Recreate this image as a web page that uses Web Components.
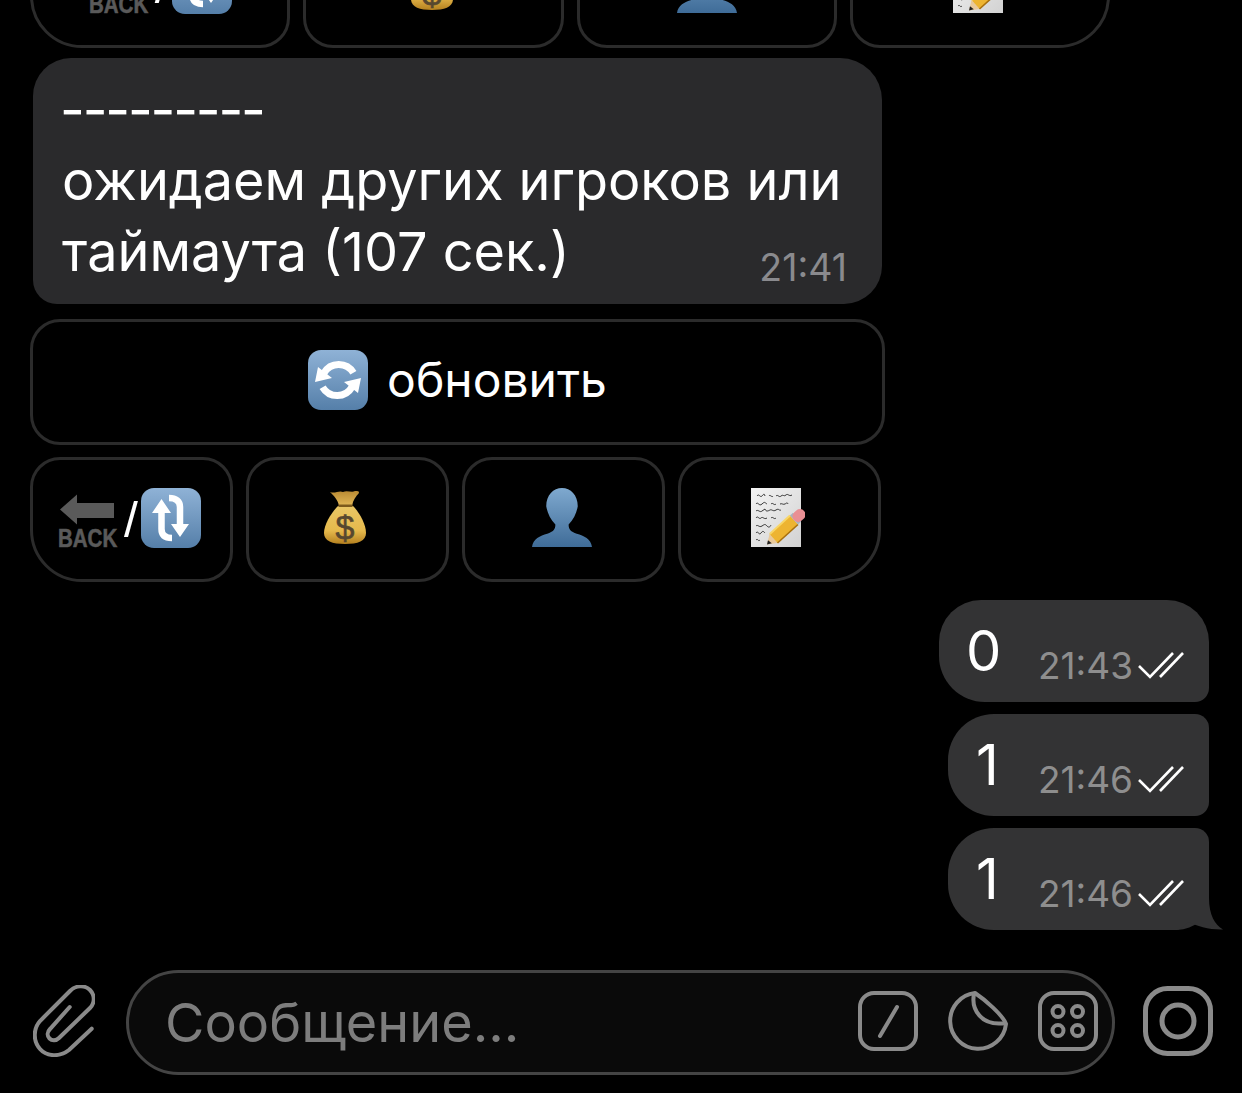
<!DOCTYPE html>
<html lang="ru">
<head>
<meta charset="utf-8">
<title>Чат</title>
<style>
  html, body { margin: 0; padding: 0; background: #000; }
  body { font-family: "Inter", "Noto Sans", sans-serif; color: #fff; }
</style>
</head>
<body>
<chat-screen>
  <key-row cols="4" size="wide">
    <key-btn centered corner="left"><back-refresh></back-refresh></key-btn>
    <key-btn centered><emoji-icon name="bag"></emoji-icon></key-btn>
    <key-btn centered><emoji-icon name="bust"></emoji-icon></key-btn>
    <key-btn centered corner="right"><emoji-icon name="memo"></emoji-icon></key-btn>
  </key-row>

  <in-bubble time="21:41">
    <span slot="head" style="letter-spacing:-2.2px;margin-left:-2px">---------</span>
    <span slot="head">ожидаем других игроков или</span>
    таймаута (107 сек.)
  </in-bubble>

  <key-row cols="1">
    <key-btn centered><emoji-icon name="sync"></emoji-icon><key-label>обновить</key-label></key-btn>
  </key-row>

  <key-row cols="4">
    <key-btn corner="left"><back-refresh></back-refresh></key-btn>
    <key-btn><emoji-icon name="bag"></emoji-icon></key-btn>
    <key-btn><emoji-icon name="bust"></emoji-icon></key-btn>
    <key-btn corner="right"><emoji-icon name="memo"></emoji-icon></key-btn>
  </key-row>

  <out-bubble text="0" time="21:43" pos="first" pad="27" width="270"></out-bubble>
  <out-bubble text="1" time="21:46" pos="middle" pad="28" width="261"></out-bubble>
  <out-bubble text="1" time="21:46" pos="last" pad="28" width="261"></out-bubble>

  <message-bar></message-bar>
</chat-screen>

<script>
class ChatScreen extends HTMLElement {
  constructor() {
    super();
    this.attachShadow({ mode: 'open' });
    this.shadowRoot.innerHTML = `
      <style>
        :host { display: flex; flex-direction: column; justify-content: flex-end; height: 1093px; overflow: hidden; background: #000; padding-bottom: 18px; box-sizing: border-box; }
        ::slotted(*) { flex-shrink: 0; }
      </style>
      <slot></slot>
    `;
  }
}

class KeyRow extends HTMLElement {
  constructor() {
    super();
    this.attachShadow({ mode: 'open' });
  }

  connectedCallback() {
    const wide = this.getAttribute('size') === 'wide';
    const cols = this.getAttribute('cols') || '1';
    const single = cols === '1';
    // the top row belongs to an older message, it is wider
    const width = wide ? 1080 : single ? 855 : 851;
    const top = wide ? 0 : single ? 15 : 12;
    this.shadowRoot.innerHTML = `
      <style>
        :host { display: grid; grid-template-columns: repeat(${cols}, 1fr); gap: 13px; width: ${width}px; height: ${single ? 126 : 125}px; margin: ${top}px 0 0 30px; }
      </style>
      <slot></slot>
    `;
  }
}

class KeyBtn extends HTMLElement {
  constructor() {
    super();
    this.attachShadow({ mode: 'open' });
  }

  connectedCallback() {
    const corner = this.getAttribute('corner');
    const bl = corner === 'left' ? 52 : 30;
    const br = corner === 'right' ? 52 : 30;
    const right = this.hasAttribute('centered') ? 0 : 4;
    this.shadowRoot.innerHTML = `
      <style>
        :host { display: flex; align-items: center; justify-content: center; gap: 19px; box-sizing: border-box; padding: 0 ${right}px 4px 0; border: 3px solid #2b2b2b; border-radius: 30px 30px ${br}px ${bl}px; }
      </style>
      <slot></slot>
    `;
  }
}

class KeyLabel extends HTMLElement {
  constructor() {
    super();
    this.attachShadow({ mode: 'open' });
    this.shadowRoot.innerHTML = `
      <style>
        :host { display: block; font-size: 48px; line-height: 60px; font-weight: 400; color: #fff; }
      </style>
      <slot></slot>
    `;
  }
}

class InBubble extends HTMLElement {
  constructor() {
    super();
    this.attachShadow({ mode: 'open' });
  }

  connectedCallback() {
    this.shadowRoot.innerHTML = `
      <style>
        :host { display: block; width: 849px; margin: 10px 0 0 33px; box-sizing: border-box; padding: 16px 35px 17px 29px; background: #2a2a2c; border-radius: 38px 42px 38px 24px; font-size: 54px; line-height: 71px; color: #fff; }
        ::slotted([slot="head"]) { display: block; white-space: nowrap; }
        .last { display: flex; justify-content: space-between; align-items: flex-end; }
        .time { font-size: 37.5px; line-height: 44px; color: #8a8a8e; margin-bottom: -3px; }
      </style>
      <slot name="head"></slot>
      <div class="last"><span><slot></slot></span><span class="time">${this.getAttribute('time')}</span></div>
    `;
  }
}

class OutBubble extends HTMLElement {
  constructor() {
    super();
    this.attachShadow({ mode: 'open' });
  }

  connectedCallback() {
    const pos = this.getAttribute('pos');
    const radius = {
      first: '42px 42px 14px 46px',
      middle: '46px 14px 14px 46px',
      last: '46px 14px 32px 46px',
    }[pos];
    const top = pos === 'first' ? 18 : 12;
    this.shadowRoot.innerHTML = `
      <style>
        :host { display: flex; align-items: flex-start; justify-content: space-between; position: relative; align-self: flex-end; width: ${this.getAttribute('width')}px; height: 102px; box-sizing: border-box; margin: ${top}px 33px 0 0; padding: 16px 25px 0 ${this.getAttribute('pad')}px; background: #333334; border-radius: ${radius}; }
        .text { font-size: 56px; line-height: 70px; color: #fff; }
        .meta { display: flex; align-items: center; gap: 5px; margin-top: 27px; }
        .time { font-size: 37px; line-height: 46px; color: #8e8e8e; }
        .checks { width: 46px; height: 28px; display: block; margin-top: -3px; }
        .tail { position: absolute; right: -15px; bottom: 0; width: 47px; height: 32px; }
      </style>
      <span class="text">${this.getAttribute('text')}</span>
      <div class="meta">
        <span class="time">${this.getAttribute('time')}</span>
        <svg class="checks" viewBox="0 0 46 28" fill="none" stroke="#fff" stroke-width="2.6">
          <path d="M1 15 L12 26 L35 2"/>
          <path d="M22 26 L45 2"/>
        </svg>
      </div>
      ${pos === 'last' ? `<svg class="tail" viewBox="0 0 47 32"><path d="M0 32 C5 31 8 27 11 24 C20 28 33 32 46 31.5 C38 27 32 17 32 0 L0 0 Z" fill="#333334"/></svg>` : ''}
    `;
  }
}

class BackRefresh extends HTMLElement {
  constructor() {
    super();
    this.attachShadow({ mode: 'open' });
    this.shadowRoot.innerHTML = `
      <style>
        :host { display: flex; align-items: flex-end; }
        .slash { font-family: "Liberation Sans", sans-serif; font-size: 50px; line-height: 56px; color: #fff; margin: 0 3px 0 6px; }
      </style>
      <emoji-icon name="back"></emoji-icon><span class="slash">/</span><emoji-icon name="loop"></emoji-icon>
    `;
  }
}

const TILE = `<defs><linearGradient id="t" x1="0" y1="0" x2="0" y2="1"><stop offset="0" stop-color="#8fb2d6"/><stop offset="1" stop-color="#557fa9"/></linearGradient></defs>
      <rect width="60" height="60" rx="13" fill="url(#t)"/>`;

const EMOJI = {
  sync: `<svg width="60" height="60" viewBox="0 0 60 60">
      ${TILE}
      <g fill="none" stroke="#fff" stroke-width="7"><path d="M45.4 22.8 A17 17 0 0 0 16 23"/><path d="M14.6 37.2 A17 17 0 0 0 44 37"/></g>
      <path d="M7 32 L10 17 L24 28 Z M53 28 L50 43 L36 32 Z" fill="#fff"/>
    </svg>`,
  loop: `<svg width="60" height="60" viewBox="0 0 60 60">
      ${TILE}
      <g fill="none" stroke="#fff" stroke-width="6.5"><path d="M20.5 22 V41 C20.5 47 24 50 31 50"/><path d="M39 38 V19 C39 13 35 10 28 10"/></g>
      <path d="M11 25 L20.5 11 L30 25 Z M30 36 L48 36 L39 49 Z" fill="#fff"/>
    </svg>`,
  back: `<svg width="60" height="57" viewBox="0 0 60 57">
      <path d="M2 18.5 L19 3.5 V12 H56 V27 H19 V33.5 Z" fill="#5a5a5a"/>
      <text x="0" y="45.9" transform="scale(1 1.22)" font-family="Liberation Sans, sans-serif" font-weight="700" font-size="20.5" fill="#5a5a5a" stroke="#5a5a5a" stroke-width=".5">BACK</text>
    </svg>`,
  bag: `<svg width="44" height="55" viewBox="0 0 44 55">
      <defs>
        <linearGradient id="g" x1="0" y1="0" x2="0" y2="1"><stop offset="0" stop-color="#e9c766"/><stop offset=".65" stop-color="#e6b94c"/><stop offset="1" stop-color="#b4801f"/></linearGradient>
        <linearGradient id="n" x1="0" y1="0" x2="0" y2="1"><stop offset="0" stop-color="#b98a33"/><stop offset="1" stop-color="#e2b857"/></linearGradient>
      </defs>
      <path d="M14 16 C8 22 0 34 0 43 C0 51 8 54 21 54 C34 54 42 51 42 43 C42 34 35 22 29 16 Z" fill="url(#g)"/>
      <path d="M6 2 C11 4 15 0 19 2 C23 0 28 3 31 1 C34 1 35 1 35 3 C32 6 29 10 28 16 H15 C14 10 10 6 6 2 Z" fill="url(#n)"/>
      <path d="M14.5 14.5 H28.5 V17 H14.5 Z" fill="#7c5a1c"/>
      <text x="21" y="49" text-anchor="middle" font-family="Liberation Sans, sans-serif" font-size="34" fill="#57482f" stroke="#57482f" stroke-width=".6">$</text>
    </svg>`,
  bust: `<svg width="60" height="60" viewBox="0 0 59 59">
      <defs><linearGradient id="b" x1="0" y1="0" x2="0" y2="1"><stop offset="0" stop-color="#7fa9cf"/><stop offset="1" stop-color="#3f6c98"/></linearGradient></defs>
      <path d="M0 58 C1 50 8 47 15 45 C21 43 23 41 23 36 C18 31 15 24 14 18 C14 7 21 0 29.5 0 C38 0 45 7 45 18 C44 24 41 31 36 36 C36 41 38 43 44 45 C51 47 58 50 59 58 Z" fill="url(#b)"/>
    </svg>`,
  memo: `<svg width="54" height="60" viewBox="0 0 54 60">
      <defs>
        <linearGradient id="p" x1="0" y1="0" x2="1" y2="1"><stop offset="0" stop-color="#f4f4f4"/><stop offset="1" stop-color="#d2d2d2"/></linearGradient>
      </defs>
      <rect x="0" y="0" width="50" height="59" fill="url(#p)"/>
      <g fill="none" stroke="#222" stroke-width=".9">
        <path d="M6 8 c2 -3 3 2 5 0 s2 -3 3 0 M18 8 c1 -2 3 2 4 0 M25 8 c2 -2 3 2 5 0 s3 1 5 -1 s3 2 6 0"/>
        <path d="M5 16 c2 -3 3 3 6 0 s3 -1 5 0 M20 16 c2 -2 3 2 5 0 M29 16 c2 -1 3 1 5 0 s2 -2 3 0"/>
        <path d="M5 23 c2 -2 4 2 6 0 l3 -2 c1 3 3 2 5 1 s3 2 6 0 s3 1 5 0"/>
        <path d="M5 30 c2 -3 3 2 5 0 s3 2 6 0 M20 30 c2 -2 3 2 5 0"/>
        <path d="M5 38 c2 -2 3 2 6 0 s3 -2 5 0 s3 1 4 -1"/>
        <path d="M5 45 c2 -3 3 3 5 0 s3 -1 4 0"/>
        <path d="M5 52 c2 -2 2 2 4 0"/>
      </g>
      <path d="M16 56.5 L18.5 46 L26.5 55 Z" fill="#e9c99b"/>
      <path d="M16 56.5 L17 52.3 L20.8 55.3 Z" fill="#222"/>
      <path d="M22.5 50.5 L43 32" stroke="#edb431" stroke-width="12" fill="none"/>
      <path d="M18.8 46 L39 27.5" stroke="#f8d667" stroke-width="2" fill="none"/>
      <path d="M26.5 55 L47 36.5" stroke="#a8700f" stroke-width="1.6" fill="none"/>
      <path d="M43 32 L46 29.3" stroke="#a9b3bd" stroke-width="12" fill="none"/>
      <path d="M47 28.4 L49 26.6" stroke="#e98f94" stroke-width="11" stroke-linecap="round" fill="none"/>
    </svg>`,
};

class EmojiIcon extends HTMLElement {
  constructor() {
    super();
    this.attachShadow({ mode: 'open' });
  }

  connectedCallback() {
    this.shadowRoot.innerHTML = `
      <style>
        :host { display: block; line-height: 0; }
      </style>
      ${EMOJI[this.getAttribute('name')]}
    `;
  }
}

class MessageBar extends HTMLElement {
  constructor() {
    super();
    this.attachShadow({ mode: 'open' });
    this.shadowRoot.innerHTML = `
      <style>
        :host { display: flex; align-items: center; margin-top: 40px; height: 105px; padding-left: 33px; }
        svg { display: block; fill: none; stroke: #8a8a8a; flex-shrink: 0; }
        .outer { margin-bottom: 3px; }
        .field { display: flex; align-items: center; gap: 30px; width: 989px; height: 105px; box-sizing: border-box; margin-left: 31px; padding: 0 14px 3px 36px; background: #0a0a0a; border: 3px solid #444; border-radius: 53px; }
        .placeholder { flex: 1; font-size: 54px; line-height: 70px; margin-top: 3px; color: #7d7d7d; }
        .camera { margin-left: 28px; }
      </style>
      <svg class="outer" width="62" height="72" viewBox="0 0 62 72" stroke-width="4" stroke-linecap="round">
        <path d="M58.7 43.7 L36 65 C27 72 14 72 7 64 C0 56 0 44 7 36 L37 6 C43 0 52 0 57 5 C62 10 62 18 57 23 L26 53 C23 56 19 56 16.5 53.5 C14 51 14 47 17 44 L36.7 22"/>
      </svg>
      <div class="field">
        <span class="placeholder">Сообщение...</span>
        <svg width="60" height="60" viewBox="0 0 60 60" stroke-width="4" stroke-linecap="round">
          <rect x="2" y="2" width="56" height="56" rx="14"/>
          <path d="M39 16 L22 45"/>
        </svg>
        <svg width="60" height="60" viewBox="0 0 60 60" stroke-width="4" stroke-linejoin="round">
          <path d="M27 2 A 28 28 0 1 0 58 33 C55 24 36 8 27 2 Z"/>
          <path d="M26 3 C23 18 33 36 58 32"/>
        </svg>
        <svg width="60" height="60" viewBox="0 0 60 60" stroke-width="4">
          <rect x="2" y="2" width="56" height="56" rx="14"/>
          <circle cx="20" cy="20.5" r="5.5"/><circle cx="39.5" cy="20.5" r="5.5"/>
          <circle cx="20" cy="39.5" r="5.5"/><circle cx="39.5" cy="39.5" r="5.5"/>
        </svg>
      </div>
      <svg class="camera outer" width="70" height="70" viewBox="0 0 70 70" stroke-width="5">
        <rect x="2.5" y="2.5" width="65" height="65" rx="22"/>
        <circle cx="35" cy="35" r="16"/>
      </svg>
    `;
  }
}

customElements.define('chat-screen', ChatScreen);
customElements.define('key-row', KeyRow);
customElements.define('key-btn', KeyBtn);
customElements.define('key-label', KeyLabel);
customElements.define('in-bubble', InBubble);
customElements.define('out-bubble', OutBubble);
customElements.define('back-refresh', BackRefresh);
customElements.define('emoji-icon', EmojiIcon);
customElements.define('message-bar', MessageBar);
</script>
</body>
</html>
